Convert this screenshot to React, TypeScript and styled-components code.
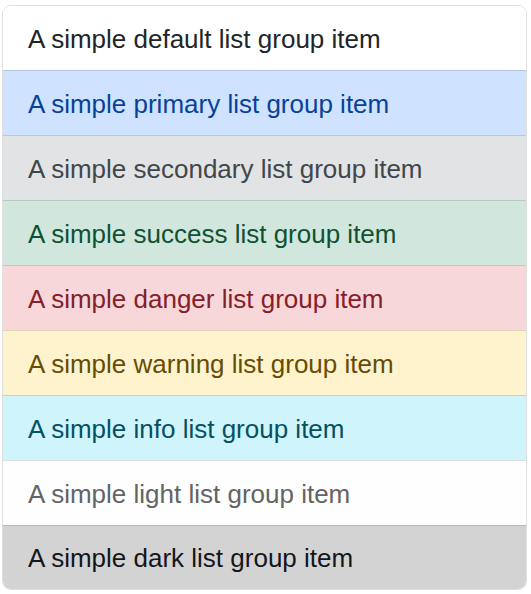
import React from "react";
import styled, { createGlobalStyle } from "styled-components";

const Global = createGlobalStyle`
  html, body { margin: 0; padding: 0; background: #fff; }
  body { font-family: "Liberation Sans", Arial, Helvetica, sans-serif; }
`;

const Page = styled.div`
  padding: 5px 4px 0 2px;
`;

const List = styled.ul`
  display: flex;
  flex-direction: column;
  margin: 0;
  padding: 0;
  list-style: none;
  border-radius: 9px;
  overflow: hidden;
  border: 1px solid rgba(0, 0, 0, 0.125);
`;

type Variant =
  | "default" | "primary" | "secondary" | "success" | "danger"
  | "warning" | "info" | "light" | "dark";

const palette: Record<Variant, { bg: string; fg: string }> = {
  default: { bg: "#ffffff", fg: "#212529" },
  primary: { bg: "#cfe2ff", fg: "#084298" },
  secondary: { bg: "#e2e3e5", fg: "#41464b" },
  success: { bg: "#d1e7dd", fg: "#0f5132" },
  danger: { bg: "#f8d7da", fg: "#842029" },
  warning: { bg: "#fff3cd", fg: "#664d03" },
  info: { bg: "#cff4fc", fg: "#055160" },
  light: { bg: "#fefefe", fg: "#636464" },
  dark: { bg: "#d3d3d4", fg: "#141619" },
};

const Item = styled.li<{ $v: Variant }>`
  display: flex;
  align-items: center;
  box-sizing: border-box;
  height: 65px;
  padding: 2px 25px 0;
  font-size: 26px;
  background: ${(p) => palette[p.$v].bg};
  color: ${(p) => palette[p.$v].fg};
  border-top: 1px solid rgba(0, 0, 0, 0.125);
  &:first-child { border-top: none; height: 64px; }
  &:last-child { height: 64px; }
`;

const items: Variant[] = [
  "default", "primary", "secondary", "success", "danger",
  "warning", "info", "light", "dark",
];

export default function App() {
  return (
    <Page>
      <Global />
      <List>
        {items.map((v) => (
          <Item key={v} $v={v}>
            A simple {v} list group item
          </Item>
        ))}
      </List>
    </Page>
  );
}
